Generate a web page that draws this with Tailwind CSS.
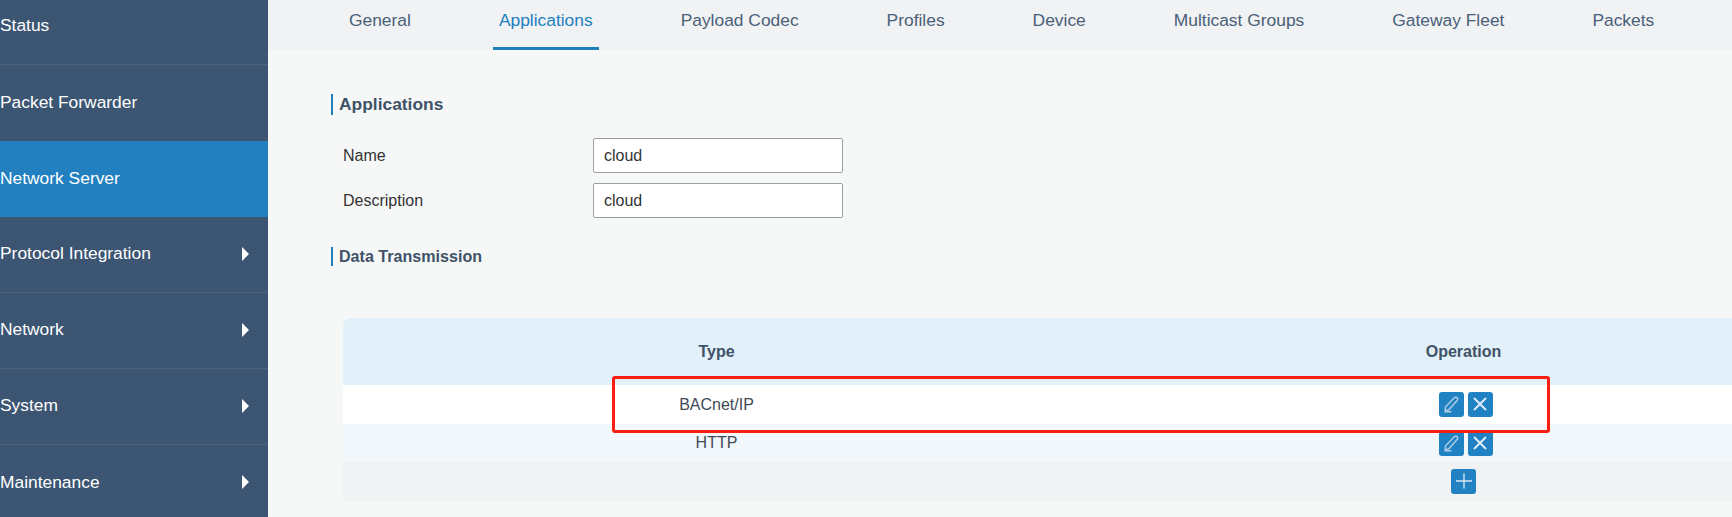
<!DOCTYPE html>
<html lang="en">
<head>
    <meta charset="UTF-8">
    <title>Applications</title>
    <script src="https://cdn.jsdelivr.net/npm/@tailwindcss/browser@4"></script>
</head>
<body class="bg-[#f6f8f8] h-[517px] overflow-hidden font-['Liberation_Sans',Arial,sans-serif]">
    <div class="relative flex h-[517px] w-[1732px] overflow-hidden">
        <!-- Sidebar -->
        <aside class="w-[268px] shrink-0 bg-[#3c5572] text-white text-[17.4px]">
            <div class="h-[65px] pb-[13px] flex items-center border-b border-[#4a627d]">Status</div>
            <div class="h-[76px] pb-[2px] flex items-center">Packet Forwarder</div>
            <div class="h-[76px] pb-[2px] flex items-center bg-[#2280c0]">Network Server</div>
            <div class="h-[76px] pb-[2px] flex items-center justify-between pr-[19px] border-b border-[#4a627d]">
                <span>Protocol Integration</span>
                <span class="border-l-[7px] border-y-[7px] border-y-transparent border-l-white"></span>
            </div>
            <div class="h-[76px] pb-[2px] flex items-center justify-between pr-[19px] border-b border-[#4a627d]">
                <span>Network</span>
                <span class="border-l-[7px] border-y-[7px] border-y-transparent border-l-white"></span>
            </div>
            <div class="h-[76px] pb-[2px] flex items-center justify-between pr-[19px] border-b border-[#4a627d]">
                <span>System</span>
                <span class="border-l-[7px] border-y-[7px] border-y-transparent border-l-white"></span>
            </div>
            <div class="h-[76px] pb-[2px] flex items-center justify-between pr-[19px]">
                <span>Maintenance</span>
                <span class="border-l-[7px] border-y-[7px] border-y-transparent border-l-white"></span>
            </div>
        </aside>

        <main class="flex-1 min-w-0">
            <!-- Tabs -->
            <nav class="h-[50px] bg-[#f0f2f4] flex pl-[75px] gap-[76px] text-[17.4px] text-[#4a6078] whitespace-nowrap">
                <a class="px-[6px] pt-[7px]">General</a>
                <a class="px-[6px] pt-[7px] text-[#2280c0] border-b-[3px] border-[#2280c0]">Applications</a>
                <a class="px-[6px] pt-[7px]">Payload Codec</a>
                <a class="px-[6px] pt-[7px]">Profiles</a>
                <a class="px-[6px] pt-[7px]">Device</a>
                <a class="px-[6px] pt-[7px]">Multicast Groups</a>
                <a class="px-[6px] pt-[7px]">Gateway Fleet</a>
                <a class="px-[6px] pt-[7px]">Packets</a>
            </nav>

            <div class="pl-[63px]">
                <h2 class="mt-[44px] h-[21px] border-l-2 border-[#2280c0] pl-[6px] text-[17.4px] leading-[21px] font-bold text-[#3f5268]">Applications</h2>

                <div class="mt-[23px] flex items-center h-[35px] pl-[12px] text-[16px] text-[#333]">
                    <label class="w-[250px]">Name</label>
                    <input value="cloud" class="w-[250px] h-[35px] px-[10px] bg-white border border-[#9aa0a6] rounded-[2px] text-[16px] text-[#333]">
                </div>
                <div class="mt-[10px] flex items-center h-[35px] pl-[12px] text-[16px] text-[#333]">
                    <label class="w-[250px]">Description</label>
                    <input value="cloud" class="w-[250px] h-[35px] px-[10px] bg-white border border-[#9aa0a6] rounded-[2px] text-[16px] text-[#333]">
                </div>

                <h2 class="mt-[29px] h-[19px] border-l-2 border-[#2280c0] pl-[6px] text-[16.1px] leading-[19px] font-bold text-[#3f5268]">Data Transmission</h2>

                <!-- Table -->
                <div class="ml-[12px] mt-[52px] w-[1494px] text-[16px] text-[#3f4a56]">
                    <div class="grid grid-cols-2 h-[67px] items-center text-center font-bold bg-[#e2f0f9] rounded-tl-[8px] text-[#3f5268]">
                        <div>Type</div>
                        <div>Operation</div>
                    </div>
                    <div class="grid grid-cols-2 h-[39px] items-center text-center bg-white">
                        <div>BACnet/IP</div>
                        <div class="flex justify-center gap-[4px] -mt-[1px] pl-[4px]">
                            <button class="w-[25px] h-[25px] rounded-[3px] bg-[#2081c3] flex items-center justify-center">
                                <svg viewBox="0 0 18 18" class="w-[18px] h-[18px]" fill="none" stroke="#a9cbe3" stroke-width="1.5"><path d="M3.5 12 12 3c1-1 2.800-1 3.400 0 .6.800.4 1.800-.3 2.500L6.800 14.800l-3.600 1.200zM2.500 16.800h7"/></svg>
                            </button>
                            <button class="w-[25px] h-[25px] rounded-[3px] bg-[#2081c3] flex items-center justify-center">
                                <svg viewBox="0 0 18 18" class="w-[18px] h-[18px]" fill="none" stroke="#e4eff7" stroke-width="1.8"><path d="M3 3l12 12M15 3 3 15"/></svg>
                            </button>
                        </div>
                    </div>
                    <div class="grid grid-cols-2 h-[38px] items-center text-center bg-[#f2f7fc]">
                        <div>HTTP</div>
                        <div class="flex justify-center gap-[4px] pl-[4px]">
                            <button class="w-[25px] h-[25px] rounded-[3px] bg-[#2081c3] flex items-center justify-center">
                                <svg viewBox="0 0 18 18" class="w-[18px] h-[18px]" fill="none" stroke="#a9cbe3" stroke-width="1.5"><path d="M3.5 12 12 3c1-1 2.800-1 3.400 0 .6.800.4 1.800-.3 2.500L6.800 14.800l-3.600 1.200zM2.500 16.800h7"/></svg>
                            </button>
                            <button class="w-[25px] h-[25px] rounded-[3px] bg-[#2081c3] flex items-center justify-center">
                                <svg viewBox="0 0 18 18" class="w-[18px] h-[18px]" fill="none" stroke="#e4eff7" stroke-width="1.8"><path d="M3 3l12 12M15 3 3 15"/></svg>
                            </button>
                        </div>
                    </div>
                    <div class="grid grid-cols-2 h-[39px] items-center text-center bg-[#f0f2f4]">
                        <div></div>
                        <div class="flex justify-center -mt-[1px]">
                            <button class="w-[25px] h-[25px] rounded-[3px] bg-[#2081c3] flex items-center justify-center">
                                <svg viewBox="0 0 18 18" class="w-[18px] h-[18px]" fill="none" stroke="#d5e6f2" stroke-width="1.400"><path d="M9 1.500v15M1 9h16"/></svg>
                            </button>
                        </div>
                    </div>
                </div>
            </div>
        </main>

        <!-- Red annotation drawn over the screenshot -->
        <div class="absolute left-[612px] top-[376px] w-[938px] h-[57px] border-[3px] border-[#fb1c12] rounded-[3px]"></div>
    </div>
</body>
</html>
